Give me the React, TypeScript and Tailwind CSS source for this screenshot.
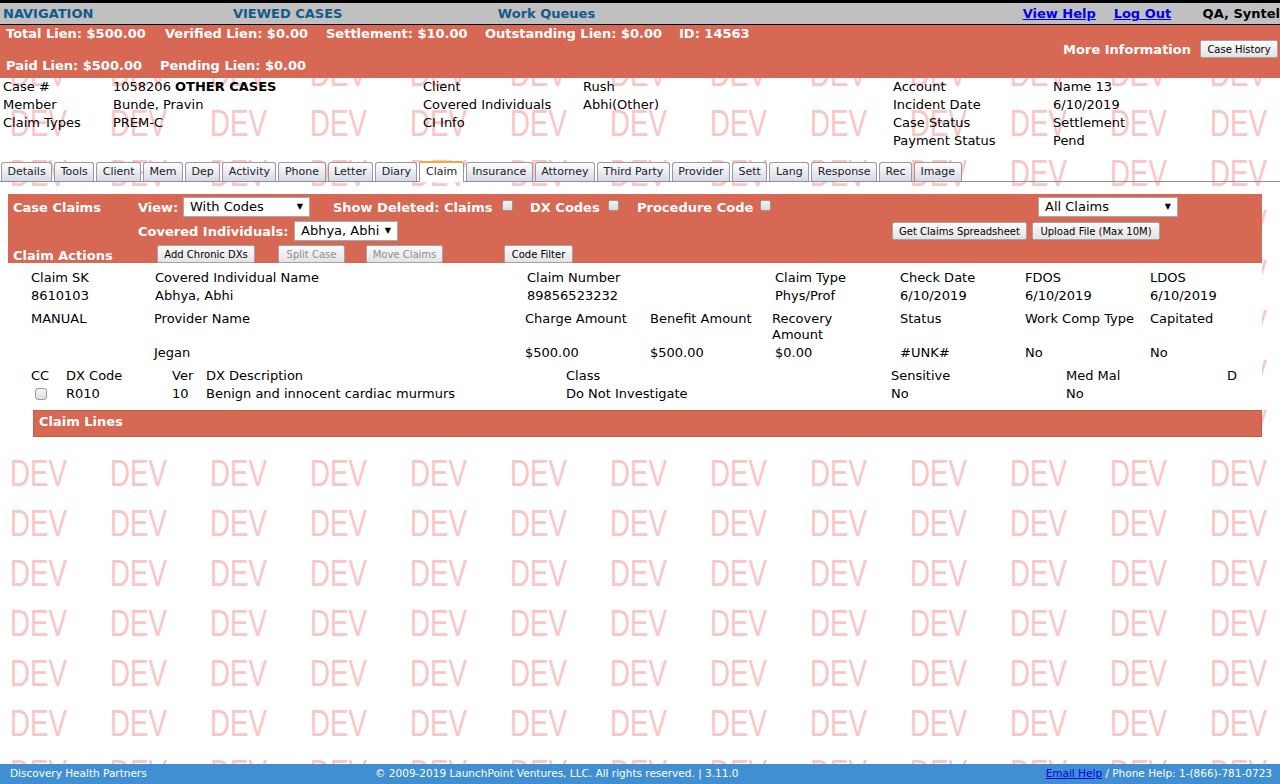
import React from 'react'

const tabs = ['Details', 'Tools', 'Client', 'Mem', 'Dep', 'Activity', 'Phone', 'Letter', 'Diary', 'Claim', 'Insurance', 'Attorney', 'Third Party', 'Provider', 'Sett', 'Lang', 'Response', 'Rec', 'Image']

function Watermark() {
  return (
    <div className="pointer-events-none absolute inset-x-0 top-[-1px] z-0 h-[785px] overflow-hidden">
      {Array.from({ length: 16 }).map((_, r) => (
        <div key={r} className="flex h-[50px] items-center pl-[10px]">
          {Array.from({ length: 13 }).map((_, c) => (
            <div key={c} className="w-[100px] shrink-0">
              <span className="inline-block origin-left scale-x-[0.77] font-['Liberation_Sans',sans-serif] text-[36px] leading-none text-[#f9c6c6]">DEV</span>
            </div>
          ))}
        </div>
      ))}
    </div>
  )
}

function Btn({ children, disabled, className = '' }: { children: React.ReactNode; disabled?: boolean; className?: string }) {
  return (
    <div className={`flex h-[18px] shrink-0 items-center justify-center whitespace-nowrap rounded-[2px] border border-[#a3a3a3] bg-linear-to-b from-[#fbfbfb] to-[#e3e3e3] text-[10px] font-normal ${disabled ? 'text-[#8e8e8e]' : 'text-black'} ${className}`}>
      {children}
    </div>
  )
}

function Select({ children, className = '' }: { children: React.ReactNode; className?: string }) {
  return (
    <div className={`flex h-[20px] shrink-0 items-center justify-between border border-[#a9a9a9] bg-white pl-[6px] pr-[6px] text-[13px] font-normal text-black ${className}`}>
      <span className="whitespace-nowrap">{children}</span>
      <span className="text-[8px]">▼</span>
    </div>
  )
}

function Check({ className = '' }: { className?: string }) {
  return <div className={`h-[11px] w-[11px] shrink-0 rounded-[2px] border border-[#9a9a9a] bg-linear-to-b from-[#f2f2f2] to-[#dcdcdc] ${className}`} />
}

export default function App() {
  return (
    <div className="relative flex h-[784px] w-[1280px] flex-col overflow-hidden bg-white font-['DejaVu_Sans',sans-serif] text-[13px] text-black">
      <Watermark />
      <div className="relative z-10 flex flex-1 flex-col">
        {/* top nav */}
        <div className="h-[3px] bg-black" />
        <div className="flex h-[22px] items-center border-b border-black bg-[#c0c0c0] pt-[1px] font-bold">
          <span className="ml-[3px] w-[230px] whitespace-nowrap text-[#115a8c]">NAVIGATION</span>
          <span className="w-[265px] whitespace-nowrap text-[#115a8c]">VIEWED CASES</span>
          <span className="w-[525px] whitespace-nowrap text-[#115a8c]">Work Queues</span>
          <span className="w-[91px] whitespace-nowrap text-[#0000ee] underline">View Help</span>
          <span className="w-[89px] whitespace-nowrap text-[#0000ee] underline">Log Out</span>
          <span className="whitespace-nowrap">QA, Syntel</span>
        </div>

        {/* lien summary */}
        <div className="flex h-[53px] bg-[#d76854] font-bold text-white">
          <div className="flex flex-col pl-[6px] pt-[1px]">
            <div className="flex h-[16px] items-center whitespace-nowrap">
              <span className="w-[159px]">Total Lien: $500.00</span>
              <span className="w-[161px]">Verified Lien: $0.00</span>
              <span className="w-[159px]">Settlement: $10.00</span>
              <span className="w-[194px]">Outstanding Lien: $0.00</span>
              <span>ID: 14563</span>
            </div>
            <div className="mt-[16px] flex h-[16px] items-center whitespace-nowrap">
              <span className="w-[154px]">Paid Lien: $500.00</span>
              <span>Pending Lien: $0.00</span>
            </div>
          </div>
          <div className="ml-auto mr-[2px] mt-[15px] flex h-[18px] items-center">
            <span className="mr-[9px] mt-[1px] whitespace-nowrap">More Information</span>
            <Btn className="w-[78px]">Case History</Btn>
          </div>
        </div>

        {/* case info */}
        <div className="grid grid-cols-[110px_310px_160px_310px_160px_1fr] pl-[3px] leading-[18px]">
          <div>Case #</div>
          <div>1058206 <b>OTHER CASES</b></div>
          <div>Client</div>
          <div>Rush</div>
          <div>Account</div>
          <div>Name 13</div>

          <div>Member</div>
          <div>Bunde, Pravin</div>
          <div>Covered Individuals</div>
          <div>Abhi(Other)</div>
          <div>Incident Date</div>
          <div>6/10/2019</div>

          <div>Claim Types</div>
          <div>PREM-C</div>
          <div>CI Info</div>
          <div></div>
          <div>Case Status</div>
          <div>Settlement</div>

          <div></div>
          <div></div>
          <div></div>
          <div></div>
          <div>Payment Status</div>
          <div>Pend</div>
        </div>

        {/* tabs */}
        <div className="mt-[12px] flex h-[20px] items-end gap-[2px] border-b border-[#8f8f8f] pl-[1px]">
          {tabs.map((t) =>
            t === 'Claim' ? (
              <div key={t} className="-mb-px h-[21px] whitespace-nowrap rounded-t-[3px] border border-b-0 border-[#9a9a9a] border-t-2 border-t-[#f2a93b] bg-white px-[5.5px] text-[11px] leading-[18px] text-[#222]">
                {t}
              </div>
            ) : (
              <div key={t} className="h-[19px] whitespace-nowrap rounded-t-[3px] border border-b-0 border-[#9a9a9a] bg-linear-to-b from-white to-[#d6d9e6] px-[5.5px] text-[11px] leading-[18px] text-[#222]">
                {t}
              </div>
            )
          )}
        </div>

        {/* case claims */}
        <div className="ml-[8px] mr-[18px] mt-[12px] bg-white pb-[4px]">
          <div className="h-[69px] bg-[#d76854] pt-[3px] font-bold text-white">
            <div className="flex h-[20px] items-center whitespace-nowrap">
              <span className="w-[130px] pl-[5px] pt-[1px]">Case Claims</span>
              <span className="w-[45px] pt-[1px]">View:</span>
              <Select className="w-[127px]">With Codes</Select>
              <span className="ml-[23px] w-[169px] pt-[1px]">Show Deleted: Claims</span>
              <Check className="-mt-[3px]" />
              <span className="ml-[17px] w-[78px] pt-[1px]">DX Codes</span>
              <Check className="-mt-[3px]" />
              <span className="ml-[18px] w-[123px] pt-[1px]">Procedure Code</span>
              <Check className="-mt-[3px]" />
              <div className="ml-auto mr-[84px]">
                <Select className="w-[140px]">All Claims</Select>
              </div>
            </div>
            <div className="mt-[4px] flex h-[20px] items-center whitespace-nowrap">
              <span className="w-[130px]" />
              <span className="w-[156px] pt-[2px]">Covered Individuals:</span>
              <Select className="w-[104px]">Abhya, Abhi</Select>
              <div className="ml-auto mr-[102px] mt-[1px] flex gap-[5px] self-start">
                <Btn className="w-[135px]">Get Claims Spreadsheet</Btn>
                <Btn className="w-[128px]">Upload File (Max 10M)</Btn>
              </div>
            </div>
            <div className="mt-[4px] flex h-[18px] items-center whitespace-nowrap">
              <span className="w-[149px] pl-[5px] pt-[3px]">Claim Actions</span>
              <Btn className="w-[98px]">Add Chronic DXs</Btn>
              <Btn disabled className="ml-[23px] w-[67px]">Split Case</Btn>
              <Btn disabled className="ml-[21px] w-[77px]">Move Claims</Btn>
              <Btn className="ml-[61px] w-[69px]">Code Filter</Btn>
            </div>
          </div>

          {/* claim header */}
          <div className="grid grid-cols-[124px_372px_124px_124px_125px_125px_125px_1fr] pl-[23px] pt-[6px] leading-[18px]">
            <div>Claim SK</div>
            <div>Covered Individual Name</div>
            <div className="col-span-2">Claim Number</div>
            <div>Claim Type</div>
            <div>Check Date</div>
            <div>FDOS</div>
            <div>LDOS</div>

            <div>8610103</div>
            <div>Abhya, Abhi</div>
            <div className="col-span-2">89856523232</div>
            <div>Phys/Prof</div>
            <div>6/10/2019</div>
            <div>6/10/2019</div>
            <div>6/10/2019</div>
          </div>

          <div className="mt-[6px] grid grid-cols-[124px_372px_124px_124px_125px_125px_125px_1fr] pl-[23px] leading-[16px]">
            <div>MANUAL</div>
            <div className="-ml-px">Provider Name</div>
            <div className="-ml-[2px]">Charge Amount</div>
            <div className="-ml-px">Benefit Amount</div>
            <div className="-ml-[3px]">Recovery<br />Amount</div>
            <div>Status</div>
            <div>Work Comp Type</div>
            <div>Capitated</div>
          </div>
          <div className="mt-[2px] grid grid-cols-[124px_372px_124px_124px_125px_125px_125px_1fr] pl-[23px] leading-[16px]">
            <div></div>
            <div className="-ml-px">Jegan</div>
            <div className="-ml-[2px]">$500.00</div>
            <div className="-ml-px">$500.00</div>
            <div>$0.00</div>
            <div>#UNK#</div>
            <div>No</div>
            <div>No</div>
          </div>

          {/* dx codes */}
          <div className="mt-[6px] grid grid-cols-[35px_106px_34px_360px_325px_175px_161px_1fr] pl-[23px] leading-[18px]">
            <div>CC</div>
            <div>DX Code</div>
            <div>Ver</div>
            <div>DX Description</div>
            <div>Class</div>
            <div>Sensitive</div>
            <div>Med Mal</div>
            <div>D</div>

            <div className="flex items-center pl-[4px]">
              <div className="h-[12px] w-[12px] rounded-[3px] border border-[#9a9a9a] bg-linear-to-b from-[#f4f4f4] to-[#dedede]" />
            </div>
            <div>R010</div>
            <div>10</div>
            <div>Benign and innocent cardiac murmurs</div>
            <div>Do Not Investigate</div>
            <div>No</div>
            <div>No</div>
            <div></div>
          </div>

          <div className="ml-[25px] mt-[7px] h-[27px] border border-[#c65a47] bg-[#d76854] pl-[5px] font-bold leading-[22px] text-white">
            Claim Lines
          </div>
        </div>

        {/* footer */}
        <div className="mt-auto flex h-[20px] items-center bg-[#3f8fd2] text-[10.5px] text-white">
          <span className="w-[375px] whitespace-nowrap pl-[10px]">Discovery Health Partners</span>
          <span className="whitespace-nowrap">© 2009-2019 LaunchPoint Ventures, LLC. All rights reserved. | 3.11.0</span>
          <span className="ml-auto whitespace-nowrap pr-[8px]">
            <span className="text-[#0000ee] underline">Email Help</span> / Phone Help: 1-(866)-781-0723
          </span>
        </div>
      </div>
    </div>
  )
}
